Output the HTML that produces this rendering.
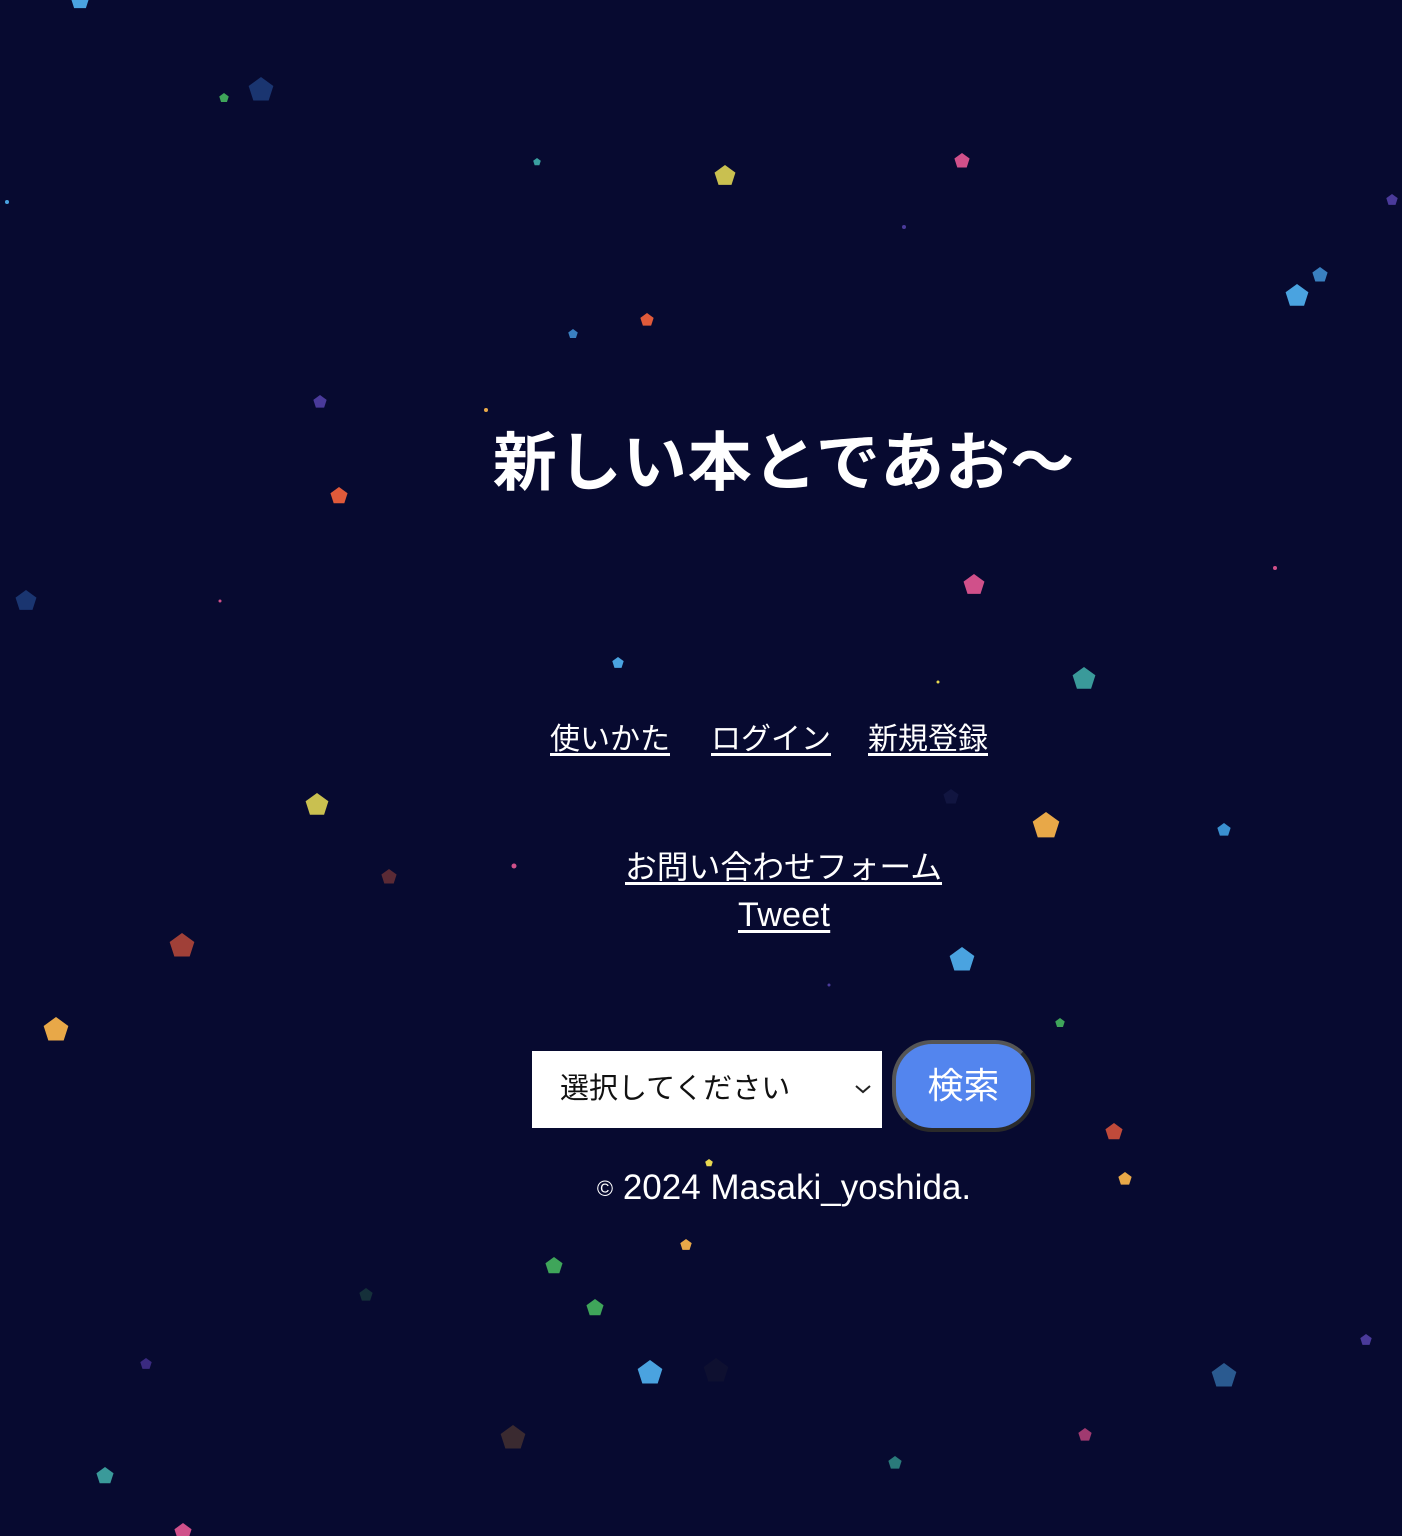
<!DOCTYPE html>
<html><head><meta charset="utf-8">
<style>
html,body{margin:0;padding:0;}
body{width:1402px;height:1536px;background:#070a30;position:relative;overflow:hidden;font-family:"Liberation Sans","Noto Sans CJK JP",sans-serif;color:#fff;}
.c{position:absolute;}
h1{position:absolute;left:0;width:1568px;top:420px;margin:0;text-align:center;font-size:64px;font-weight:bold;line-height:86px;letter-spacing:1px;}
.t{position:absolute;width:1568px;left:0;text-align:center;font-size:31px;line-height:40px;}
.l{position:absolute;font-size:30px;line-height:40px;white-space:nowrap;}
a{color:#fff;text-decoration:underline;text-underline-offset:4px;}
.sel{position:absolute;left:532px;top:1051px;width:350px;height:77px;background:#fff;color:#111;font-size:29px;box-sizing:border-box;padding-left:28px;line-height:77px;}
.sel svg{position:absolute;right:10px;top:32px;}
.btn{position:absolute;left:892px;top:1040px;width:143px;height:92px;border-radius:40px;background:#5385ee;border:4px solid #555;box-sizing:border-box;border-right-color:#2a2a2a;border-bottom-color:#2a2a2a;font-size:36px;text-align:center;line-height:84px;}
</style></head><body>
<svg class="c" style="left:0;top:0" width="1402" height="1536">
<g>
<polygon points="0,-1 0.95,-0.31 0.59,0.81 -0.59,0.81 -0.95,-0.31" transform="translate(261,90) scale(13)" fill="#1a3570"/>
<polygon points="0,-1 0.95,-0.31 0.59,0.81 -0.59,0.81 -0.95,-0.31" transform="translate(224,98) scale(5)" fill="#3fa55a"/>
<polygon points="0,-1 0.95,-0.31 0.59,0.81 -0.59,0.81 -0.95,-0.31" transform="translate(80,0) scale(10)" fill="#4aa3e0"/>
<polygon points="0,-1 0.95,-0.31 0.59,0.81 -0.59,0.81 -0.95,-0.31" transform="translate(537,162) scale(4)" fill="#3aa0a0"/>
<polygon points="0,-1 0.95,-0.31 0.59,0.81 -0.59,0.81 -0.95,-0.31" transform="translate(725,176) scale(11)" fill="#c9c050"/>
<polygon points="0,-1 0.95,-0.31 0.59,0.81 -0.59,0.81 -0.95,-0.31" transform="translate(962,161) scale(8)" fill="#d0508a"/>
<polygon points="0,-1 0.95,-0.31 0.59,0.81 -0.59,0.81 -0.95,-0.31" transform="translate(1392,200) scale(6)" fill="#4a3a9a"/>
<polygon points="0,-1 0.95,-0.31 0.59,0.81 -0.59,0.81 -0.95,-0.31" transform="translate(1320,275) scale(8)" fill="#3a80c0"/>
<polygon points="0,-1 0.95,-0.31 0.59,0.81 -0.59,0.81 -0.95,-0.31" transform="translate(1297,296) scale(12)" fill="#4aa3e0"/>
<polygon points="0,-1 0.95,-0.31 0.59,0.81 -0.59,0.81 -0.95,-0.31" transform="translate(647,320) scale(7)" fill="#e05a3a"/>
<polygon points="0,-1 0.95,-0.31 0.59,0.81 -0.59,0.81 -0.95,-0.31" transform="translate(573,334) scale(5)" fill="#3a80c0"/>
<polygon points="0,-1 0.95,-0.31 0.59,0.81 -0.59,0.81 -0.95,-0.31" transform="translate(320,402) scale(7)" fill="#4a3a9a"/>
<polygon points="0,-1 0.95,-0.31 0.59,0.81 -0.59,0.81 -0.95,-0.31" transform="translate(339,496) scale(9)" fill="#e05a3a"/>
<polygon points="0,-1 0.95,-0.31 0.59,0.81 -0.59,0.81 -0.95,-0.31" transform="translate(974,585) scale(11)" fill="#d0508a"/>
<polygon points="0,-1 0.95,-0.31 0.59,0.81 -0.59,0.81 -0.95,-0.31" transform="translate(26,601) scale(11)" fill="#1a3570"/>
<polygon points="0,-1 0.95,-0.31 0.59,0.81 -0.59,0.81 -0.95,-0.31" transform="translate(618,663) scale(6)" fill="#4aa3e0"/>
<polygon points="0,-1 0.95,-0.31 0.59,0.81 -0.59,0.81 -0.95,-0.31" transform="translate(1084,679) scale(12)" fill="#3a9a9a"/>
<polygon points="0,-1 0.95,-0.31 0.59,0.81 -0.59,0.81 -0.95,-0.31" transform="translate(951,797) scale(8)" fill="#111540"/>
<polygon points="0,-1 0.95,-0.31 0.59,0.81 -0.59,0.81 -0.95,-0.31" transform="translate(317,805) scale(12)" fill="#c9c050"/>
<polygon points="0,-1 0.95,-0.31 0.59,0.81 -0.59,0.81 -0.95,-0.31" transform="translate(1046,826) scale(14)" fill="#e8a848"/>
<polygon points="0,-1 0.95,-0.31 0.59,0.81 -0.59,0.81 -0.95,-0.31" transform="translate(1224,830) scale(7)" fill="#3a90d0"/>
<polygon points="0,-1 0.95,-0.31 0.59,0.81 -0.59,0.81 -0.95,-0.31" transform="translate(389,877) scale(8)" fill="#5a2a35"/>
<polygon points="0,-1 0.95,-0.31 0.59,0.81 -0.59,0.81 -0.95,-0.31" transform="translate(182,946) scale(13)" fill="#a04038"/>
<polygon points="0,-1 0.95,-0.31 0.59,0.81 -0.59,0.81 -0.95,-0.31" transform="translate(962,960) scale(13)" fill="#4aa3e0"/>
<polygon points="0,-1 0.95,-0.31 0.59,0.81 -0.59,0.81 -0.95,-0.31" transform="translate(1060,1023) scale(5)" fill="#3fa55a"/>
<polygon points="0,-1 0.95,-0.31 0.59,0.81 -0.59,0.81 -0.95,-0.31" transform="translate(56,1030) scale(13)" fill="#e8a848"/>
<polygon points="0,-1 0.95,-0.31 0.59,0.81 -0.59,0.81 -0.95,-0.31" transform="translate(1114,1132) scale(9)" fill="#c04a3a"/>
<polygon points="0,-1 0.95,-0.31 0.59,0.81 -0.59,0.81 -0.95,-0.31" transform="translate(1125,1179) scale(7)" fill="#e8a848"/>
<polygon points="0,-1 0.95,-0.31 0.59,0.81 -0.59,0.81 -0.95,-0.31" transform="translate(709,1163) scale(4)" fill="#e8d850"/>
<polygon points="0,-1 0.95,-0.31 0.59,0.81 -0.59,0.81 -0.95,-0.31" transform="translate(686,1245) scale(6)" fill="#e8a848"/>
<polygon points="0,-1 0.95,-0.31 0.59,0.81 -0.59,0.81 -0.95,-0.31" transform="translate(554,1266) scale(9)" fill="#3fa55a"/>
<polygon points="0,-1 0.95,-0.31 0.59,0.81 -0.59,0.81 -0.95,-0.31" transform="translate(595,1308) scale(9)" fill="#3fa55a"/>
<polygon points="0,-1 0.95,-0.31 0.59,0.81 -0.59,0.81 -0.95,-0.31" transform="translate(366,1295) scale(7)" fill="#15303a"/>
<polygon points="0,-1 0.95,-0.31 0.59,0.81 -0.59,0.81 -0.95,-0.31" transform="translate(146,1364) scale(6)" fill="#3a2a80"/>
<polygon points="0,-1 0.95,-0.31 0.59,0.81 -0.59,0.81 -0.95,-0.31" transform="translate(650,1373) scale(13)" fill="#4aa3e0"/>
<polygon points="0,-1 0.95,-0.31 0.59,0.81 -0.59,0.81 -0.95,-0.31" transform="translate(716,1371) scale(13)" fill="#0e1030"/>
<polygon points="0,-1 0.95,-0.31 0.59,0.81 -0.59,0.81 -0.95,-0.31" transform="translate(1366,1340) scale(6)" fill="#4a3a9a"/>
<polygon points="0,-1 0.95,-0.31 0.59,0.81 -0.59,0.81 -0.95,-0.31" transform="translate(1224,1376) scale(13)" fill="#2a5a90"/>
<polygon points="0,-1 0.95,-0.31 0.59,0.81 -0.59,0.81 -0.95,-0.31" transform="translate(513,1438) scale(13)" fill="#3a2a30"/>
<polygon points="0,-1 0.95,-0.31 0.59,0.81 -0.59,0.81 -0.95,-0.31" transform="translate(1085,1435) scale(7)" fill="#a03a70"/>
<polygon points="0,-1 0.95,-0.31 0.59,0.81 -0.59,0.81 -0.95,-0.31" transform="translate(895,1463) scale(7)" fill="#2a7a7a"/>
<polygon points="0,-1 0.95,-0.31 0.59,0.81 -0.59,0.81 -0.95,-0.31" transform="translate(105,1476) scale(9)" fill="#3a9a9a"/>
<polygon points="0,-1 0.95,-0.31 0.59,0.81 -0.59,0.81 -0.95,-0.31" transform="translate(183,1532) scale(9)" fill="#d0508a"/>
<circle cx="7" cy="202" r="2" fill="#4aa3e0"/>
<circle cx="904" cy="227" r="2" fill="#4a3a9a"/>
<circle cx="486" cy="410" r="2" fill="#e8a848"/>
<circle cx="1275" cy="568" r="2" fill="#d0508a"/>
<circle cx="220" cy="601" r="1.5" fill="#d0508a"/>
<circle cx="938" cy="682" r="1.5" fill="#e8d850"/>
<circle cx="514" cy="866" r="2.5" fill="#d0508a"/>
<circle cx="829" cy="985" r="1.5" fill="#4a3a9a"/>
</g></svg>
<h1>新しい本とであお〜</h1>
<div class="l" style="left:550px;top:720px"><a>使いかた</a></div>
<div class="l" style="left:711px;top:720px"><a>ログイン</a></div>
<div class="l" style="left:868px;top:720px"><a>新規登録</a></div>
<div class="l" style="left:625px;top:847px;font-size:31.8px"><a>お問い合わせフォーム</a></div>
<div class="l" style="left:738px;top:895px;font-size:34px;letter-spacing:0.3px"><a>Tweet</a></div>
<div class="sel">選択してください<svg width="18" height="12" viewBox="0 0 18 12"><path d="M2 3 L9 9 L16 3" stroke="#222" stroke-width="2" fill="none"/></svg></div>
<div class="btn">検索</div>
<div class="t" style="top:1168px;font-size:35px;"><span style="font-size:22px;vertical-align:3px">©</span> 2024 Masaki_yoshida.</div>
</body></html>
